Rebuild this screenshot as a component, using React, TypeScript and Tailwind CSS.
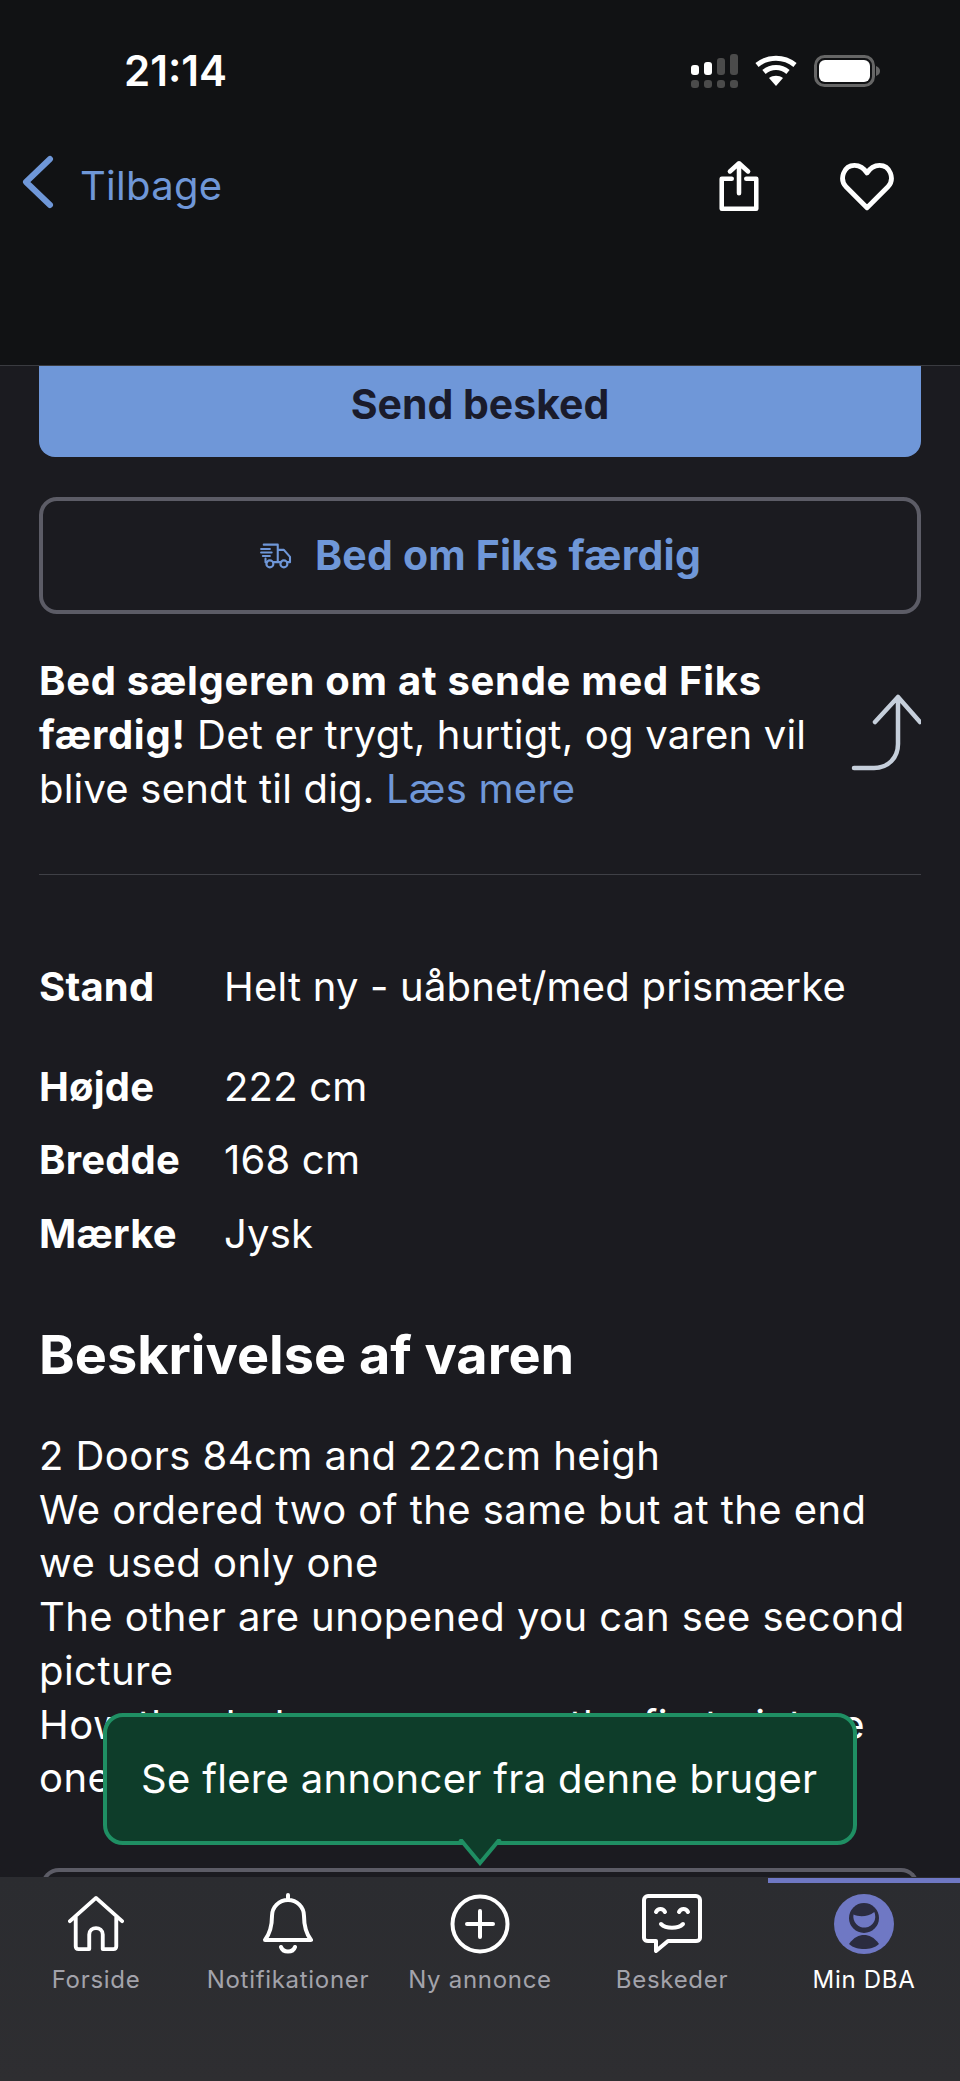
import React from 'react';

const font = "font-['Inter',sans-serif]";

function Row({ label, value, className }: { label: string; value: string; className: string }) {
  return (
    <div className={`flex items-center text-[40px] leading-[54px] tracking-[0.2px] ${className}`}>
      <span className="w-[185px] font-bold">{label}</span>
      <span>{value}</span>
    </div>
  );
}

function Tab({ label, active, children }: { label: string; active?: boolean; children: React.ReactNode }) {
  return (
    <div className="flex flex-1 flex-col items-center pt-[14px]">
      <div className="flex h-[66px] items-center justify-center">{children}</div>
      <span className={`mt-[8px] text-[24px] leading-[30px] tracking-[0.7px] ${active ? 'text-white' : 'text-[#a3a3ab]'}`}>
        {label}
      </span>
    </div>
  );
}

export default function App() {
  return (
    <div className={`flex h-[2081px] w-[960px] flex-col overflow-hidden bg-[#1b1b20] text-white ${font}`}>
      {/* top bar */}
      <header className="h-[366px] shrink-0 border-b border-[#3a3b40] bg-[#111214]">
        <div className="flex h-[110px] items-center justify-between pl-[124px] pr-[80px] pt-[32px]">
          <span className="text-[42px] font-semibold leading-none">21:14</span>
          <div className="flex items-center gap-[17px]">
            <svg width="48" height="34" viewBox="0 0 48 34" fill="#fff">
              <rect x="1" y="11" width="8" height="10" rx="3" />
              <rect x="14" y="8" width="8" height="13" rx="3" />
              <rect x="27" y="4" width="8" height="17" rx="3" fill="#4b4b4b" />
              <rect x="40" y="0" width="8" height="21" rx="3" fill="#4b4b4b" />
              <rect x="1" y="26" width="8" height="8" rx="3" fill="#4b4b4b" />
              <rect x="14" y="26" width="8" height="8" rx="3" fill="#4b4b4b" />
              <rect x="27" y="26" width="8" height="8" rx="3" fill="#4b4b4b" />
              <rect x="40" y="26" width="8" height="8" rx="3" fill="#4b4b4b" />
            </svg>
            <svg width="42" height="32" viewBox="0 0 42 32" fill="none" stroke="#fff" strokeWidth="5">
              <path d="M2 10c11-9 27-9 38 0" />
              <path d="M9 17c7-6 17-6 24 0" />
              <path d="M21 31l-7-8c4-3 10-3 14 0z" fill="#fff" stroke="none" />
            </svg>
            <svg width="66" height="32" viewBox="0 0 66 32">
              <rect x="1.5" y="1.5" width="58" height="29" rx="9" fill="none" stroke="#666" strokeWidth="3" />
              <rect x="5" y="5" width="51" height="22" rx="6" fill="#fff" />
              <path d="M62 11c3 1 4 3 4 5s-1 4-4 5z" fill="#666" />
            </svg>
          </div>
        </div>
        <div className="mt-[45px] flex items-center justify-between pl-[22px] pr-[66px]">
          <div className="flex items-center gap-[26px] text-[#6f97d8]">
            <svg className="mb-[8px]" width="32" height="54" viewBox="0 0 32 54" fill="none" stroke="currentColor" strokeWidth="6" strokeLinecap="round" strokeLinejoin="round">
              <path d="M28 4L4 27l24 23" />
            </svg>
            <span className="text-[40px] leading-none tracking-[0.3px]">Tilbage</span>
          </div>
          <div className="flex items-center gap-[81px]">
            <svg width="40" height="56" viewBox="0 0 44 56" fill="none" stroke="#fff" strokeWidth="5" strokeLinecap="round" strokeLinejoin="round">
              <path d="M14 20H3v33h38V20H30" />
              <path d="M22 36V3M12 12l10-9 10 9" />
            </svg>
            <svg width="54" height="49" viewBox="0 0 56 50" fill="none" stroke="#fff" strokeWidth="5" strokeLinejoin="round">
              <path d="M28 47L6 25C-1 17 4 3 15 3c6 0 10 3 13 8 3-5 7-8 13-8 11 0 16 14 9 22z" />
            </svg>
          </div>
        </div>
      </header>

      {/* scrolling content */}
      <main className="relative min-h-0 flex-1 overflow-hidden px-[39px]">
        <div className="flex h-[91px] items-center justify-center rounded-b-[16px] bg-[#6f97d8] pb-[13px] text-[41px] font-bold text-[#1a1b2b]">
          Send besked
        </div>
        <div className="mt-[40px] flex h-[117px] items-center justify-center gap-[22px] rounded-[18px] border-4 border-[#5c5c66] text-[#6f97d8]">
          <svg width="34" height="28" viewBox="0 0 36 32" fill="none" stroke="currentColor" strokeWidth="2.4" strokeLinecap="round" strokeLinejoin="round">
            <path d="M4 3h16v20h-5M8 23H6V19M1 8h10M1 12h12M3 16h8M20 9h7l7 8v6h-3M24 23h-3" />
            <circle cx="11" cy="25" r="4" />
            <circle cx="27" cy="25" r="4" />
          </svg>
          <span className="text-[41px] font-bold tracking-[0.2px]">Bed om Fiks færdig</span>
        </div>

        <div className="relative mt-[40px] border-b border-[#3f4046] pb-[58px]">
          <p className="w-[800px] text-[40px] leading-[54px] tracking-[0.2px]">
            <b className="tracking-[0.7px]">Bed sælgeren om at sende med Fiks færdig!</b> Det er trygt, hurtigt, og varen vil blive sendt til dig. <span className="text-[#6f97d8]">Læs mere</span>
          </p>
          <svg className="absolute right-0 top-[40px]" width="70" height="80" viewBox="0 0 70 80" fill="none" stroke="#c6cfdb" strokeWidth="4.5" strokeLinecap="round" strokeLinejoin="round">
            <path d="M24 28L47 3l22 25M47 3v47c0 14-10 24-24 24H3" />
          </svg>
        </div>

        <Row label="Stand" value="Helt ny - uåbnet/med prismærke" className="mt-[85px]" />
        <Row label="Højde" value="222 cm" className="mt-[46px]" />
        <Row label="Bredde" value="168 cm" className="mt-[19px]" />
        <Row label="Mærke" value="Jysk" className="mt-[20px]" />

        <h2 className="mt-[61px] text-[54px] font-bold leading-[66px]">Beskrivelse af varen</h2>
        <p className="mt-[41px] text-[40px] leading-[53.7px] tracking-[0.45px]">
          2 Doors 84cm and 222cm heigh
          <br />
          We ordered two of the same but at the end
          <br />
          we used only one
          <br />
          The other are unopened you can see second
          <br />
          picture
          <br />
          How the dark one seem on the first picture
          <br />
          one
        </p>
        <div className="absolute left-[41px] right-[41px] top-[1502px] h-[40px] rounded-t-[18px] border-x-4 border-t-4 border-[#5c5c66]" />

        {/* tooltip */}
        <div className="absolute left-[103px] top-[1347px] flex h-[132px] w-[754px] items-center rounded-[20px] border-4 border-[#1f8f63] bg-[#0e3d2a] pl-[34px] text-[40px] tracking-[0.3px]">
          Se flere annoncer fra denne bruger
          <svg className="absolute left-[351px] top-[122px]" width="44" height="27" viewBox="0 0 44 27">
            <path d="M2 0l20 24L42 0" fill="#0e3d2a" stroke="#1f8f63" strokeWidth="4" />
          </svg>
        </div>
      </main>

      {/* tab bar */}
      <nav className="relative flex h-[204px] shrink-0 bg-gradient-to-b from-[#2b2c30] to-[#2e2e31]">
        <div className="absolute right-0 top-[1px] h-[5px] w-[192px] bg-[#6f78c4]" />
        <Tab label="Forside">
          <svg width="56" height="58" viewBox="0 0 58 58" fill="none" stroke="#fff" strokeWidth="4" strokeLinecap="round" strokeLinejoin="round">
            <path d="M2 26L29 2l27 24M8 22v30c0 2 1 3 3 3h11V40c0-9 14-9 14 0v15h11c2 0 3-1 3-3V22" />
          </svg>
        </Tab>
        <Tab label="Notifikationer">
          <svg width="50" height="62" viewBox="0 0 50 62" fill="none" stroke="#fff" strokeWidth="4" strokeLinecap="round" strokeLinejoin="round">
            <path d="M25 2v5M2 47c6-8 7-16 7-24 0-9 7-16 16-16s16 7 16 16c0 8 1 16 7 24zM18 54c2 6 12 6 14 0" />
          </svg>
        </Tab>
        <Tab label="Ny annonce">
          <svg width="60" height="60" viewBox="0 0 60 60" fill="none" stroke="#fff" strokeWidth="4" strokeLinecap="round">
            <circle cx="30" cy="30" r="27.5" />
            <path d="M30 17v26M17 30h26" />
          </svg>
        </Tab>
        <Tab label="Beskeder">
          <svg width="60" height="60" viewBox="0 0 60 60" fill="none" stroke="#fff" strokeWidth="4" strokeLinecap="round" strokeLinejoin="round">
            <path d="M6 2h48c2 0 4 2 4 4v38c0 2-2 3-4 3H26L14 57v-10H6c-2 0-4-1-4-3V6c0-2 2-4 4-4z" />
            <path d="M14 18c2-4 7-4 9 0M37 18c2-4 7-4 9 0M19 30c5 5 17 5 22 0" />
          </svg>
        </Tab>
        <Tab label="Min DBA" active>
          <svg width="60" height="60" viewBox="0 0 60 60">
            <circle cx="30" cy="30" r="30" fill="#6f78c4" />
            <circle cx="30" cy="24" r="15" fill="#2b2c40" />
            <path d="M19.5 20.5C25 23 34 23 40.3 18A11 11 0 1 1 19.5 20.5z" fill="#6f78c4" />
            <path d="M15 50c5-7 10-9 15-9s10 2 15 9c-4 4-10 5-15 5s-11-1-15-5z" fill="#2b2c40" />
          </svg>
        </Tab>
      </nav>
    </div>
  );
}
